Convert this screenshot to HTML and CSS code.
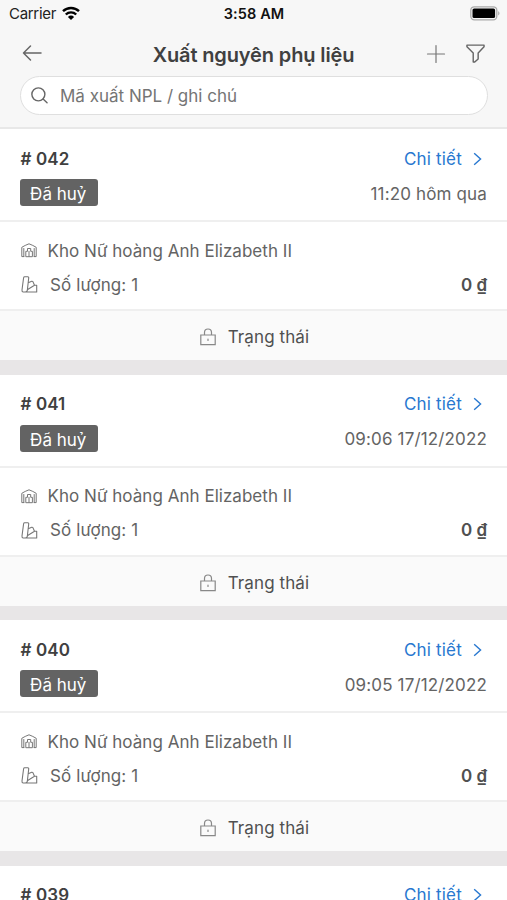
FILE: index.html
```html
<!DOCTYPE html>
<html lang="vi">
<head>
<meta charset="utf-8">
<title>Xuất nguyên phụ liệu</title>
<link rel="stylesheet" href="styles.css">
</head>
<body>
<svg class="sprite" aria-hidden="true">
  <symbol id="chevron" viewBox="0 0 10 16"><path d="M1.2 1.5 8.500 8l-7.300 6.500"/></symbol>
  <symbol id="warehouse" viewBox="0 0 16 15"><path d="M2.800 13.600H.8V4.300Q4 2.300 8 .8q4 1.500 7.200 3.500v9.300h-2M4.800 13.300V8.300h1.700V5.500h3.200v2.800h1.700v5zM8 8.300v5M2.800 13.600V5.500"/><path d="M13.200 13.600V5.500"/></symbol>
  <symbol id="fabric" viewBox="0 0 17 17"><path d="M3.600.8H6.800Q7.800.8 7.700 2L6.300 14.500q-.5 1.500-2 1.500H2Q.8 15.800 1 14L2.600 1.800Q2.800.8 3.600.8zM7.200 6.800l3.500-1.500q.7-.3 1.200.3l1.600 3.700-6.800 4.200M5 16h10.700V9.300h-2.200"/></symbol>
  <symbol id="lock" viewBox="0 0 16 18"><path d="M.8 7h14.400v9.600H.8zM4.500 7V4.500a3.500 3.500 0 0 1 7 0V7M8 11v1.500"/></symbol>
</svg>
<header class="header">
  <div class="status">
    <div class="carrier"><span>Carrier</span>
      <svg class="wifi" viewBox="0 0 18 13"><path d="M1 4.200a11.500 11.500 0 0 1 16 0M3.800 7.500a7.500 7.500 0 0 1 10.400 0"/><path class="solid" d="M9 13 5.900 9.900a4.400 4.400 0 0 1 6.200 0z"/></svg>
    </div>
    <span class="clock">3:58 AM</span>
    <svg class="battery" viewBox="0 0 30 15"><rect class="shell" x=".8" y=".8" width="26" height="13" rx="3.500"/><rect class="charge" x="2.500" y="2.500" width="22.600" height="9.600" rx="1.600"/><path class="tip" d="M28.200 5q2.600 2.300 0 4.600z"/></svg>
  </div>
  <div class="nav">
    <svg class="icon back" viewBox="0 0 20 16"><path d="M8.500 1 1.500 8l7 7M1.500 8H19"/></svg>
    <h1 class="title">Xuất nguyên phụ liệu</h1>
    <div class="actions">
      <svg class="icon plus" viewBox="0 0 18 18"><path d="M9 .5v17M.5 9h17"/></svg>
      <svg class="icon filter" viewBox="0 0 20 20"><path d="M1 1.200h18v1.600l-6.200 6.700v6.200l-3.600 3.300H7.600V9.500L1 2.800z"/></svg>
    </div>
  </div>
  <div class="search">
    <svg class="icon glass" viewBox="0 0 18 18"><circle cx="7.800" cy="7.800" r="6.900"/><path d="m12.800 12.800 4.200 3.800"/></svg>
    <span class="hint">Mã xuất NPL / ghi chú</span>
  </div>
</header>
<main class="list">
  <article class="card">
    <div class="top">
      <div class="row"><span class="code"># 042</span><a class="link"><span>Chi tiết</span><svg class="chevron"><use href="#chevron"/></svg></a></div>
      <div class="row second"><span class="badge">Đã huỷ</span><span class="time">11:20 hôm qua</span></div>
    </div>
    <div class="info">
      <div class="line"><svg class="icon warehouse"><use href="#warehouse"/></svg><span class="place">Kho Nữ hoàng Anh Elizabeth II</span></div>
      <div class="line"><svg class="icon fabric"><use href="#fabric"/></svg><span class="count">Số lượng: 1</span><span class="price">0 ₫</span></div>
    </div>
    <div class="foot"><svg class="icon lock"><use href="#lock"/></svg><span>Trạng thái</span></div>
  </article>
  <article class="card">
    <div class="top">
      <div class="row"><span class="code"># 041</span><a class="link"><span>Chi tiết</span><svg class="chevron"><use href="#chevron"/></svg></a></div>
      <div class="row second"><span class="badge">Đã huỷ</span><span class="time">09:06 17/12/2022</span></div>
    </div>
    <div class="info">
      <div class="line"><svg class="icon warehouse"><use href="#warehouse"/></svg><span class="place">Kho Nữ hoàng Anh Elizabeth II</span></div>
      <div class="line"><svg class="icon fabric"><use href="#fabric"/></svg><span class="count">Số lượng: 1</span><span class="price">0 ₫</span></div>
    </div>
    <div class="foot"><svg class="icon lock"><use href="#lock"/></svg><span>Trạng thái</span></div>
  </article>
  <article class="card">
    <div class="top">
      <div class="row"><span class="code"># 040</span><a class="link"><span>Chi tiết</span><svg class="chevron"><use href="#chevron"/></svg></a></div>
      <div class="row second"><span class="badge">Đã huỷ</span><span class="time">09:05 17/12/2022</span></div>
    </div>
    <div class="info">
      <div class="line"><svg class="icon warehouse"><use href="#warehouse"/></svg><span class="place">Kho Nữ hoàng Anh Elizabeth II</span></div>
      <div class="line"><svg class="icon fabric"><use href="#fabric"/></svg><span class="count">Số lượng: 1</span><span class="price">0 ₫</span></div>
    </div>
    <div class="foot"><svg class="icon lock"><use href="#lock"/></svg><span>Trạng thái</span></div>
  </article>
  <article class="card">
    <div class="top">
      <div class="row"><span class="code"># 039</span><a class="link"><span>Chi tiết</span><svg class="chevron"><use href="#chevron"/></svg></a></div>
    </div>
  </article>
</main>
</body>
</html>
```
FILE: styles.css
```css
* { box-sizing: border-box; }
body {
  margin: 0;
  height: 900px;
  overflow: hidden;
  display: flex;
  flex-direction: column;
  background: #e8e6e7;
  color: #646464;
  font: 400 17px/24px Inter, "Noto Sans", sans-serif;
  white-space: nowrap;
}
svg { display: block; flex: none; overflow: visible; }
.sprite { display: none; }
.icon { fill: none; stroke: #666; stroke-width: 1.5; stroke-linejoin: round; stroke-linecap: round; }
.header {
  flex: none;
  height: 129px;
  background: #f7f7f7;
  border-bottom: 2px solid #e8e8e8;
}
.status {
  display: grid;
  grid-template-columns: 1fr auto 1fr;
  align-items: center;
  height: 28px;
  padding: 0 7px 0 9px;
  color: #222;
  font-size: 15px;
}
.carrier { display: flex; align-items: center; gap: 6px; letter-spacing: -.3px; }
.wifi { width: 18px; height: 13px; margin-top: -2px; fill: none; stroke: #000; stroke-width: 2.4; }
.wifi .solid { fill: #000; stroke: none; }
.clock { font-weight: 600; font-size: 14.500px; color: #111; letter-spacing: .1px; margin-left: -1px; }
.battery { width: 30px; height: 15px; margin-top: -1px; justify-self: end; }
.shell { fill: #f7f7f7; stroke: #aaa; stroke-width: 1.3; }
.charge { fill: #000; }
.tip { fill: #aaa; }
.nav {
  display: grid;
  grid-template-columns: 1fr auto 1fr;
  align-items: center;
  height: 48px;
  padding: 2px 22px 0 22px;
}
.back { width: 20px; height: 16px; }
.title { margin: 4px 0 0; color: #404040; font-size: 20px; font-weight: 600; line-height: 28px; letter-spacing: -.13px; }
.actions { display: flex; align-items: center; justify-content: flex-end; gap: 21px; margin-top: 1px; }
.plus { width: 18px; height: 18px; stroke-width: 1.2; stroke: #777; }
.filter { width: 19px; height: 19px; }
.search {
  display: flex;
  align-items: center;
  gap: 11px;
  height: 39px;
  margin: -.5px 19px 0 20px;
  padding: 1px 11px 0 10px;
  background: #fff;
  border: 1.500px solid #dfdfdf;
  border-radius: 20px;
}
.glass { width: 17px; height: 17px; }
.hint { margin-left: 1px; color: #757575; }
.list { display: flex; flex-direction: column; gap: 14.500px; }
.card { flex: none; height: 231px; background: #fff; }
.top { height: 93px; padding: 17.500px 20px 0 20.500px; border-bottom: 2px solid #efefef; }
.row { display: flex; align-items: center; justify-content: space-between; height: 24px; }
.second { height: 27px; margin-top: 8.500px; }
.code { color: #404040; font-weight: 600; letter-spacing: .1px; }
.link { display: flex; align-items: center; gap: 11px; padding-right: 5px; color: #2878d0; letter-spacing: .2px; }
.chevron { width: 9px; height: 14px; fill: none; stroke: #2878d0; stroke-width: 1.6; }
.badge {
  width: 77.500px;
  height: 27px;
  margin-left: -.5px;
  border-radius: 3px;
  background: #636363;
  color: #fff;
  line-height: 30px;
  text-align: center;
  text-indent: -1px;
}
.time { padding-top: 2px; letter-spacing: .15px; }
.info { display: flex; flex-direction: column; gap: 10px; height: 89px; padding: 16.500px 20px 0 21px; border-bottom: 2px solid #efefef; }
.line { display: flex; align-items: center; height: 24px; }
.warehouse { width: 16px; height: 15px; stroke-width: 1; margin-right: 10.500px; stroke: #777; }
.fabric { width: 17px; height: 17px; stroke-width: 1.1; margin-right: 12px; stroke: #777; }
.place { letter-spacing: .03px; }
.count { letter-spacing: .1px; }
.price { margin-left: auto; color: #505050; font-weight: 600; }
.foot { display: flex; align-items: center; justify-content: center; gap: 12px; height: 49px; padding: 3px 0 0 2px; background: #fafafa; }
.foot span { color: #505050; letter-spacing: .1px; }
.lock { width: 16px; height: 18px; stroke-width: 1.2; stroke: #888; stroke-linejoin: miter; }
```
